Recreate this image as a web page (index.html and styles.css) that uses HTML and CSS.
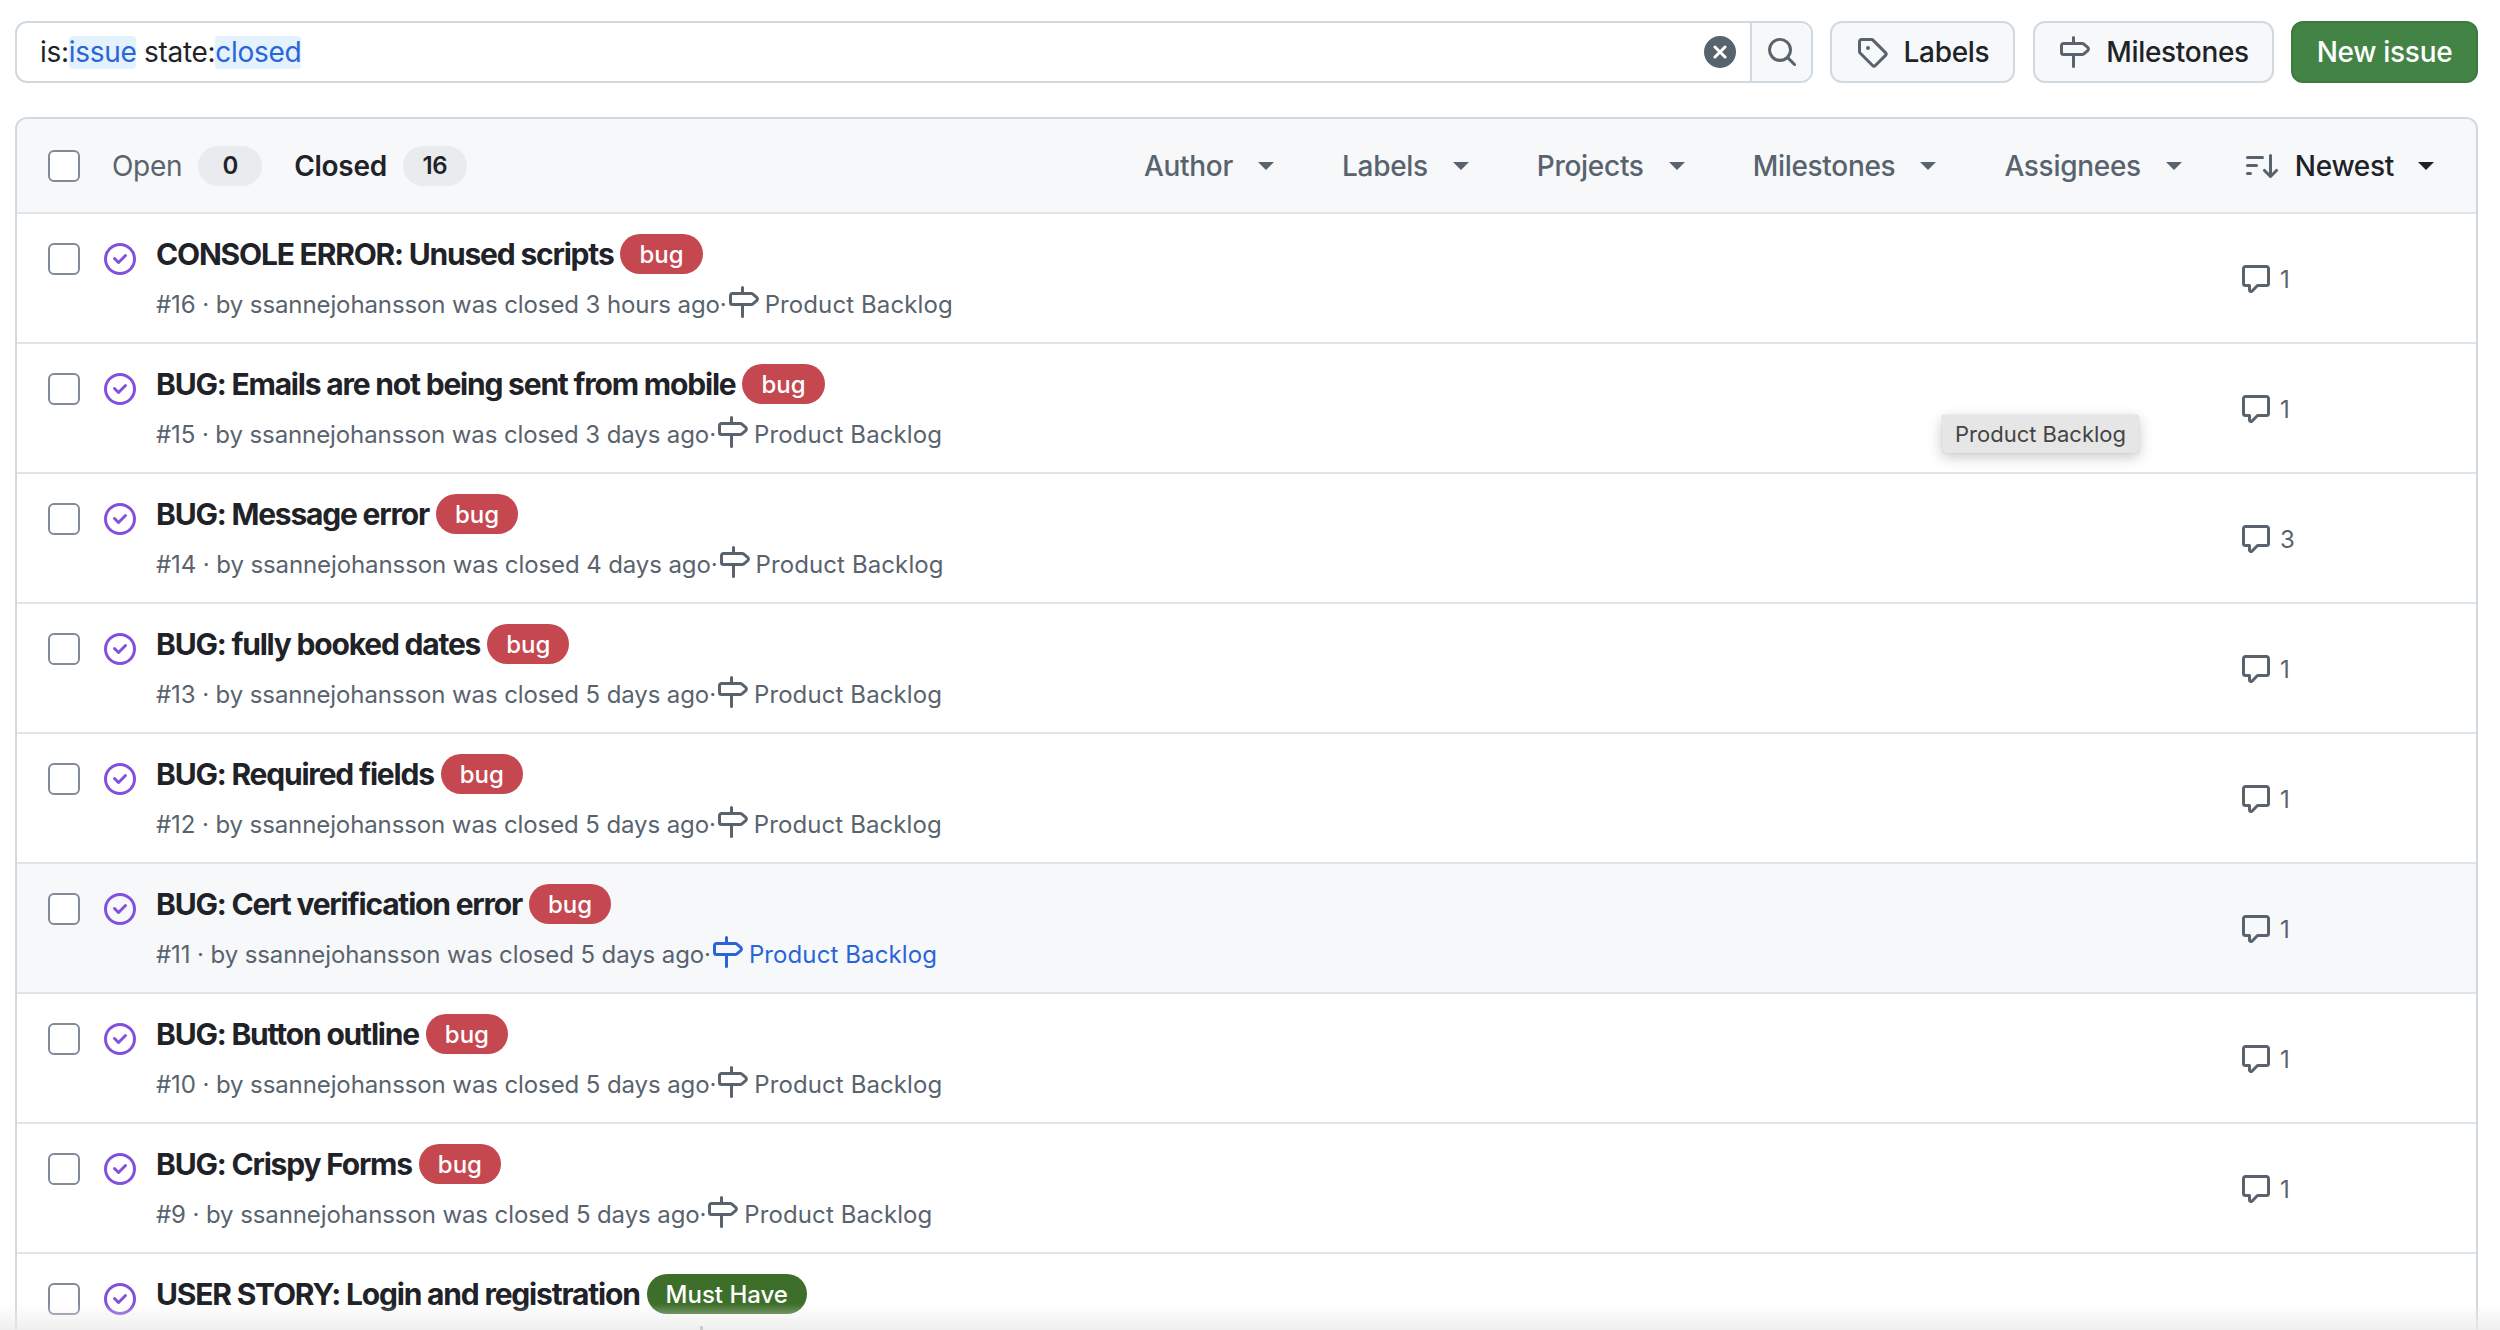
FILE: index.html
```html
<!DOCTYPE html>
<html lang="en">
<head>
    <meta charset="UTF-8">
    <title>Issues</title>
    <link rel="stylesheet" href="styles.css">
</head>
<body>
    <svg class="sprite" width="0" height="0">
        <symbol id="i-milestone" viewBox="0 0 16 16"><path d="M7.75 0a.75.75 0 0 1 .75.75V3h3.634c.414 0 .814.147 1.13.414l2.07 1.75a1.75 1.75 0 0 1 0 2.672l-2.07 1.75a1.75 1.75 0 0 1-1.13.414H8.5v5.25a.75.75 0 0 1-1.5 0V10H2.75A1.75 1.75 0 0 1 1 8.25v-3.5C1 3.784 1.784 3 2.75 3H7V.75A.75.75 0 0 1 7.75 0Zm4.384 8.5a.25.25 0 0 0 .161-.06l2.07-1.75a.25.25 0 0 0 0-.38l-2.07-1.75a.25.25 0 0 0-.161-.06H2.75a.25.25 0 0 0-.25.25v3.5c0 .138.112.25.25.25h9.384Z"/></symbol>
        <symbol id="i-tag" viewBox="0 0 16 16"><path d="M1 7.775V2.75C1 1.784 1.784 1 2.75 1h5.025c.464 0 .91.184 1.238.513l6.25 6.25a1.75 1.75 0 0 1 0 2.474l-5.026 5.026a1.75 1.75 0 0 1-2.474 0l-6.25-6.25A1.752 1.752 0 0 1 1 7.775Zm1.5 0c0 .066.026.13.073.177l6.25 6.25a.25.25 0 0 0 .354 0l5.025-5.025a.25.25 0 0 0 0-.354l-6.25-6.25a.25.25 0 0 0-.177-.073H2.75a.25.25 0 0 0-.25.25ZM6 5a1 1 0 1 1 0 2 1 1 0 0 1 0-2Z"/></symbol>
        <symbol id="i-search" viewBox="0 0 16 16"><path d="M10.68 11.74a6 6 0 0 1-7.922-8.982 6 6 0 0 1 8.982 7.922l3.04 3.04a.749.749 0 0 1-.326 1.275.749.749 0 0 1-.734-.215ZM11.5 7a4.499 4.499 0 1 0-8.997 0A4.499 4.499 0 0 0 11.5 7Z"/></symbol>
        <symbol id="i-clear" viewBox="0 0 16 16"><path d="M2.343 13.657A8 8 0 1 1 13.658 2.343 8 8 0 0 1 2.343 13.657ZM6.03 4.97a.751.751 0 0 0-1.042.018.751.751 0 0 0-.018 1.042L6.94 8 4.97 9.97a.749.749 0 0 0 .326 1.275.749.749 0 0 0 .734-.215L8 9.06l1.97 1.97a.749.749 0 0 0 1.275-.326.749.749 0 0 0-.215-.734L9.06 8l1.97-1.97a.749.749 0 0 0-.326-1.275.749.749 0 0 0-.734.215L8 6.94Z"/></symbol>
        <symbol id="i-closed" viewBox="0 0 16 16"><path d="M11.28 6.78a.75.75 0 0 0-1.06-1.06L7.25 8.69 5.78 7.22a.75.75 0 0 0-1.06 1.06l2 2a.75.75 0 0 0 1.06 0l3.5-3.5Z"/><path d="M16 8A8 8 0 1 1 0 8a8 8 0 0 1 16 0Zm-1.5 0a6.5 6.5 0 1 0-13 0 6.5 6.5 0 0 0 13 0Z"/></symbol>
        <symbol id="i-comment" viewBox="0 0 16 16"><path d="M1 2.75C1 1.784 1.784 1 2.75 1h10.5c.966 0 1.75.784 1.75 1.75v7.5A1.75 1.75 0 0 1 13.25 12H9.06l-2.573 2.573A1.458 1.458 0 0 1 4 13.543V12H2.75A1.75 1.75 0 0 1 1 10.25Zm1.75-.25a.25.25 0 0 0-.25.25v7.5c0 .138.112.25.25.25h2a.75.75 0 0 1 .75.75v2.19l2.72-2.72a.749.749 0 0 1 .53-.22h4.5a.25.25 0 0 0 .25-.25v-7.5a.25.25 0 0 0-.25-.25Z"/></symbol>
        <symbol id="i-sort" viewBox="0 0 16 16"><path d="M.75 3h7.5a.75.75 0 0 1 0 1.5H.75a.75.75 0 0 1 0-1.5Zm0 4h4.5a.75.75 0 0 1 0 1.5H.75a.75.75 0 0 1 0-1.5Zm0 4h1.5a.75.75 0 0 1 0 1.5H.75a.75.75 0 0 1 0-1.5ZM12.25 2a.75.75 0 0 1 .75.75v8.69l1.72-1.72a.75.75 0 1 1 1.06 1.06l-3 3a.75.75 0 0 1-1.06 0l-3-3a.75.75 0 1 1 1.06-1.06l1.72 1.72V2.75a.75.75 0 0 1 .75-.75Z"/></symbol>
    </svg>

    <div class="toolbar">
        <div class="search">
            <div class="search-field">
                <span>is:<span class="token">issue</span> state:<span class="token">closed</span></span>
                <svg class="icon clear-icon"><use href="#i-clear"/></svg>
            </div>
            <div class="search-btn"><svg class="icon"><use href="#i-search"/></svg></div>
        </div>
        <a class="btn btn-labels"><svg class="icon"><use href="#i-tag"/></svg>Labels</a>
        <a class="btn btn-milestones"><svg class="icon"><use href="#i-milestone"/></svg>Milestones</a>
        <a class="btn btn-new">New issue</a>
    </div>

    <div class="list">
        <div class="list-head">
            <span class="check"></span>
            <span class="tab">Open <span class="count">0</span></span>
            <span class="tab tab-on">Closed <span class="count">16</span></span>
            <div class="filters">
                <span class="filter">Author<i class="caret"></i></span>
                <span class="filter">Labels<i class="caret"></i></span>
                <span class="filter">Projects<i class="caret"></i></span>
                <span class="filter">Milestones<i class="caret"></i></span>
                <span class="filter">Assignees<i class="caret"></i></span>
                <span class="filter f-sort"><svg class="icon"><use href="#i-sort"/></svg>Newest<i class="caret"></i></span>
            </div>
        </div>

        <div class="row">
            <span class="check"></span>
            <svg class="icon state"><use href="#i-closed"/></svg>
            <div class="main">
                <div class="title">CONSOLE ERROR: Unused scripts <span class="label bug">bug</span></div>
                <div class="meta">#16 · by ssannejohansson was closed 3 hours ago·<a class="ms"><svg class="icon"><use href="#i-milestone"/></svg>Product Backlog</a></div>
            </div>
            <div class="comments"><svg class="icon"><use href="#i-comment"/></svg>1</div>
        </div>
        <div class="row">
            <span class="check"></span>
            <svg class="icon state"><use href="#i-closed"/></svg>
            <div class="main">
                <div class="title">BUG: Emails are not being sent from mobile <span class="label bug">bug</span></div>
                <div class="meta">#15 · by ssannejohansson was closed 3 days ago·<a class="ms"><svg class="icon"><use href="#i-milestone"/></svg>Product Backlog</a></div>
            </div>
            <div class="comments"><svg class="icon"><use href="#i-comment"/></svg>1</div>
            <div class="tooltip">Product Backlog</div>
        </div>
        <div class="row">
            <span class="check"></span>
            <svg class="icon state"><use href="#i-closed"/></svg>
            <div class="main">
                <div class="title">BUG: Message error <span class="label bug">bug</span></div>
                <div class="meta">#14 · by ssannejohansson was closed 4 days ago·<a class="ms"><svg class="icon"><use href="#i-milestone"/></svg>Product Backlog</a></div>
            </div>
            <div class="comments"><svg class="icon"><use href="#i-comment"/></svg>3</div>
        </div>
        <div class="row">
            <span class="check"></span>
            <svg class="icon state"><use href="#i-closed"/></svg>
            <div class="main">
                <div class="title">BUG: fully booked dates <span class="label bug">bug</span></div>
                <div class="meta">#13 · by ssannejohansson was closed 5 days ago·<a class="ms"><svg class="icon"><use href="#i-milestone"/></svg>Product Backlog</a></div>
            </div>
            <div class="comments"><svg class="icon"><use href="#i-comment"/></svg>1</div>
        </div>
        <div class="row">
            <span class="check"></span>
            <svg class="icon state"><use href="#i-closed"/></svg>
            <div class="main">
                <div class="title">BUG: Required fields <span class="label bug">bug</span></div>
                <div class="meta">#12 · by ssannejohansson was closed 5 days ago·<a class="ms"><svg class="icon"><use href="#i-milestone"/></svg>Product Backlog</a></div>
            </div>
            <div class="comments"><svg class="icon"><use href="#i-comment"/></svg>1</div>
        </div>
        <div class="row row-hover">
            <span class="check"></span>
            <svg class="icon state"><use href="#i-closed"/></svg>
            <div class="main">
                <div class="title">BUG: Cert verification error <span class="label bug">bug</span></div>
                <div class="meta">#11 · by ssannejohansson was closed 5 days ago·<a class="ms ms-on"><svg class="icon"><use href="#i-milestone"/></svg>Product Backlog</a></div>
            </div>
            <div class="comments"><svg class="icon"><use href="#i-comment"/></svg>1</div>
        </div>
        <div class="row">
            <span class="check"></span>
            <svg class="icon state"><use href="#i-closed"/></svg>
            <div class="main">
                <div class="title">BUG: Button outline <span class="label bug">bug</span></div>
                <div class="meta">#10 · by ssannejohansson was closed 5 days ago·<a class="ms"><svg class="icon"><use href="#i-milestone"/></svg>Product Backlog</a></div>
            </div>
            <div class="comments"><svg class="icon"><use href="#i-comment"/></svg>1</div>
        </div>
        <div class="row">
            <span class="check"></span>
            <svg class="icon state"><use href="#i-closed"/></svg>
            <div class="main">
                <div class="title">BUG: Crispy Forms <span class="label bug">bug</span></div>
                <div class="meta">#9 · by ssannejohansson was closed 5 days ago·<a class="ms"><svg class="icon"><use href="#i-milestone"/></svg>Product Backlog</a></div>
            </div>
            <div class="comments"><svg class="icon"><use href="#i-comment"/></svg>1</div>
        </div>
        <div class="row">
            <span class="check"></span>
            <svg class="icon state"><use href="#i-closed"/></svg>
            <div class="main">
                <div class="title">USER STORY: Login and registration <span class="label must">Must Have</span></div>
                <!-- only the top of the milestone icon shows above the fold here -->
                <div class="meta"><a class="ms ms-fold"><svg class="icon"><use href="#i-milestone"/></svg></a></div>
            </div>
        </div>
    </div>
    <div class="bottom-fade"></div>
</body>
</html>
```

FILE: styles.css
```css
html, body {
    height: 100%;
}
body {
    margin: 0;
    padding: 21px 22px 0 15px;
    box-sizing: border-box;
    overflow: hidden;
    position: relative;
    background-color: #fff;
    color: #1f2328;
    font-family: Inter, "Noto Sans", sans-serif;
    font-size: 28px;
}
.sprite {
    position: absolute;
}
.icon {
    width: 32px;
    height: 32px;
    fill: currentColor;
    flex: none;
}

/* top bar */
.toolbar {
    display: flex;
    height: 62px;
    margin-bottom: 34px;
}
.search {
    display: flex;
    width: 1798px;
    margin-right: 17px;
    box-sizing: border-box;
    border: 2px solid #d1d9e0;
    border-radius: 12px;
    overflow: hidden;
}
.search-field {
    flex: 1;
    display: flex;
    align-items: center;
    justify-content: space-between;
    padding: 0 14px 0 23px;
    letter-spacing: -0.3px;
}
.token {
    display: inline-block;
    background-color: #e3f2fd;
    color: #2a65d8;
    border-radius: 4px;
    line-height: 33px;
}
.clear-icon {
    color: #59636e;
}
.search-btn {
    width: 59px;
    display: flex;
    align-items: center;
    justify-content: center;
    background-color: #f6f8fa;
    border-left: 2px solid #d1d9e0;
    color: #59636e;
}
.btn {
    display: flex;
    align-items: center;
    justify-content: center;
    box-sizing: border-box;
    border: 2px solid #d1d9e0;
    border-radius: 12px;
    background-color: #f6f8fa;
    font-weight: 500;
    letter-spacing: -0.3px;
}
.btn .icon {
    color: #59636e;
    margin-right: 16px;
}
.btn-labels {
    width: 185px;
    margin-right: 18px;
}
.btn-milestones {
    width: 241px;
    margin-right: 17px;
}
.btn-new {
    width: 187px;
    background-color: #438446;
    border-color: #3c7a40;
    color: #fff;
}

/* list */
.list {
    border: 2px solid #d1d9e0;
    border-bottom: none;
    border-radius: 12px 12px 0 0;
    overflow: hidden;
}
.list-head {
    display: flex;
    align-items: center;
    height: 93px;
    padding-left: 31px;
    background-color: #f6f8fa;
    border-bottom: 2px solid #e1e4e8;
}
.check {
    flex: none;
    box-sizing: border-box;
    width: 32px;
    height: 32px;
    background-color: #fff;
    border: 2px solid #818b98;
    border-radius: 6px;
}
.tab {
    display: flex;
    align-items: center;
    color: #59636e;
    margin-left: 32px;
    letter-spacing: -0.3px;
}
.tab-on {
    color: #1f2328;
    font-weight: 600;
}
.tab + .tab-on {
    margin-left: 32px;
}
.count {
    display: flex;
    align-items: center;
    justify-content: center;
    width: 64px;
    height: 40px;
    margin-left: 16px;
    background-color: #e9ebef;
    border-radius: 20px;
    color: #1f2328;
    font-size: 24px;
    font-weight: 600;
}
.filters {
    margin-left: auto;
    display: flex;
    align-items: center;
    padding-right: 42px;
    color: #59636e;
    font-weight: 500;
    letter-spacing: -0.3px;
}
.filter {
    display: flex;
    align-items: center;
    margin-left: 68px;
}
.caret {
    width: 0;
    height: 0;
    margin-left: 25px;
    border-top: 8px solid currentColor;
    border-left: 8px solid transparent;
    border-right: 8px solid transparent;
}
.f-sort {
    color: #1f2328;
    margin-left: 64px;
}
.f-sort .icon {
    color: #59636e;
    margin-right: 17px;
}
.f-sort .caret {
    margin-left: 24px;
}

.row {
    display: flex;
    position: relative;
    box-sizing: border-box;
    height: 130px;
    padding: 20px 0 0 31px;
    border-bottom: 2px solid #e1e4e8;
}
.row-hover {
    background-color: #f6f8fa;
}
.row .check {
    margin-top: 9px;
}
.state {
    color: #8250df;
    margin: 9px 0 0 24px;
}
.main {
    flex: 1;
    margin-left: 20px;
}
.title {
    display: flex;
    align-items: center;
    height: 40px;
    font-size: 30px;
    font-weight: 700;
    letter-spacing: -1.2px;
    white-space: pre;
}
.label {
    display: flex;
    align-items: center;
    height: 40px;
    margin-left: 1px;
    padding: 0 19px;
    border-radius: 20px;
    color: #fff;
    font-size: 24px;
    font-weight: 500;
    letter-spacing: 0;
}
.bug {
    background-color: #c5474f;
}
.must {
    background-color: #3e6f2a;
}
.meta {
    display: flex;
    align-items: center;
    height: 40px;
    margin-top: 10px;
    color: #59636e;
    font-size: 24px;
    letter-spacing: -0.1px;
}
.ms {
    display: flex;
    align-items: center;
    letter-spacing: 0.1px;
}
.ms .icon {
    margin-right: 6px;
    margin-top: -4px;
}
.ms-on {
    color: #2a65d8;
}
.ms-fold {
    margin-left: 530px;
}
.comments {
    display: flex;
    align-items: center;
    position: absolute;
    left: 2223px;
    top: 49px;
    color: #59636e;
    font-size: 24px;
}
.comments .icon {
    margin-right: 8px;
}
.tooltip {
    position: absolute;
    left: 1925px;
    top: 71px;
    padding: 0 13px;
    line-height: 38px;
    background-color: #e6e6e6;
    border-radius: 3px;
    box-shadow: 0 4px 14px rgba(0, 0, 0, 0.22), 0 0 1px rgba(0, 0, 0, 0.3);
    color: #444;
    font-size: 22px;
    z-index: 2;
}
.bottom-fade {
    position: absolute;
    left: 0;
    right: 0;
    bottom: 0;
    height: 26px;
    background: linear-gradient(rgba(240, 240, 240, 0), rgba(235, 235, 235, 0.8));
    pointer-events: none;
}
```
